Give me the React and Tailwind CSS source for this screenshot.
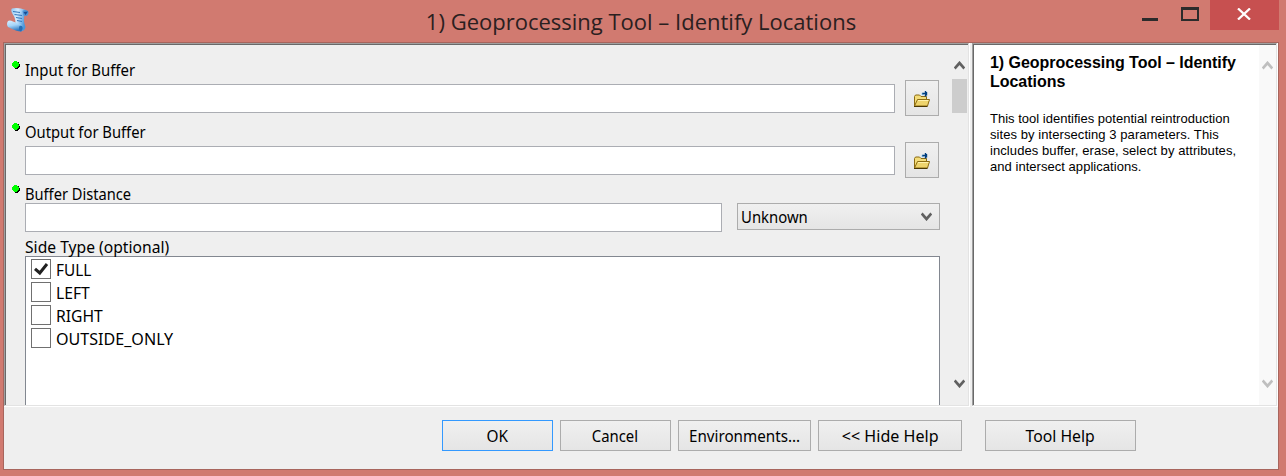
import React from "react";

const UI = "font-['Noto_Sans',sans-serif] text-[16px] leading-[20px] text-black whitespace-pre";

function Label({ children, className = "" }) {
  return <span className={`${UI} block origin-left ${className}`}>{children}</span>;
}

function ScriptIcon() {
  return (
    <svg className="block" width="24" height="26" viewBox="0 0 24 26">
      <defs>
        <linearGradient id="paper" x1="0" y1="0" x2="1" y2="0.3">
          <stop offset="0" stopColor="#8fc8f4" />
          <stop offset=".45" stopColor="#d3ecff" />
          <stop offset="1" stopColor="#4a97dc" />
        </linearGradient>
        <linearGradient id="roll" x1="0" y1="0" x2="0.3" y2="1">
          <stop offset="0" stopColor="#d8efff" />
          <stop offset=".5" stopColor="#a5d5f8" />
          <stop offset="1" stopColor="#2e78be" />
        </linearGradient>
      </defs>
      <path d="M6 1.500 Q12 0 20 3 L18.500 8 Q17 14 19.500 20 Q19 24 14 24.500 L9 20 Q11 13 6 6 Q4.500 3 6 1.500Z" fill="url(#paper)" />
      <path d="M16.500 4 Q19 2 22 4 Q23.500 7 20.500 9 L17.500 8.500Z" fill="#4d93d4" />
      <path d="M17.500 5 L22 4.500 L19.500 8Z" fill="#174d96" />
      <path d="M2 14 Q4 13 7 14.500 L15 17.500 Q18 20 15.500 24.500 Q12 25 2 20 Q0 17 2 14Z" fill="url(#roll)" />
      <path d="M13.500 19 Q17 18 16.500 22 L14.500 24.500 Q12 23 13.500 19Z" fill="#276eb5" />
      <path d="M7 4.500 L14 5.500 M8.500 7.500 L16 8.500 M10 10.500 L16 11.500 M11 13.500 L16 14.500" stroke="#3579bd" strokeWidth="1.200" />
    </svg>
  );
}

function FolderIcon() {
  return (
    <svg className="mt-[3px] block" width="18" height="18" viewBox="0 0 18 18">
      <path d="M1.500 15 V5.500 L2.500 4 H6.500 L8 5.500 H13.500 V8.500" fill="#f3dc79" stroke="#8b6b12" />
      <path d="M1.500 15 L4.500 8.500 H16.500 L14.500 15Z" fill="#eed46d" stroke="#8b6b12" />
      <path d="M5 9.500 H15.500" stroke="#fff2ad" />
      <path d="M1 15.500 H14.500" stroke="#4b3804" />
      <path d="M8.500 3 H10.500" fill="none" stroke="#a5daf5" strokeWidth="2.500" />
      <path d="M10 3.500 V2.500 H14 M12.500 0 V5.500 M13.500 1 V4.500" fill="none" stroke="#003f80" strokeWidth="1.400" />
    </svg>
  );
}

function Chevron({ up, color }) {
  return (
    <svg className="block" width="11" height="9" viewBox="0 0 12 9" preserveAspectRatio="none">
      <path d={up ? "M0.700 7.500 L6 2 L11.300 7.500" : "M0.700 1.500 L6 7 L11.300 1.500"} fill="none" stroke={color} strokeWidth="2.900" />
    </svg>
  );
}

function Dot() {
  return (
    <svg className="mt-[1px] block" width="9" height="9" viewBox="0 0 9 9" shapeRendering="crispEdges">
      <path d="M3 1 H7 V3 H8 V6 H7 V7 H6 V8 H3 V7 H2 V6Z" fill="#000" />
      <path d="M2 0 H5 V1 H6 V2 H7 V5 H6 V6 H5 V7 H2 V6 H1 V5 H0 V2 H1 V1 H2Z" fill="#00ff00" />
    </svg>
  );
}

function Caption({ children, scale }) {
  return (
    <div className="flex h-[24px]">
      <div className="w-[19px] shrink-0 pl-[6px]"><Dot /></div>
      <Label className={`h-[20px] ${scale}`}>{children}</Label>
    </div>
  );
}

function FileRow() {
  return (
    <div className="flex h-[36px] items-start pl-[19px]">
      <div className="mt-[4px] h-[29px] w-[870px] border border-[#abadb3] bg-white" />
      <button className="ml-[10px] flex h-[36px] w-[34px] items-center justify-center border border-[#acacac] bg-linear-to-b from-[#f0f0f0] to-[#e5e5e5]">
        <FolderIcon />
      </button>
    </div>
  );
}

function Option({ children, checked, scale }) {
  return (
    <div className="flex h-[23px] items-start">
      <div className="h-[20px] w-[20px] shrink-0 border border-[#707070] bg-white">
        {checked && (
          <svg className="block" width="18" height="18" viewBox="0 0 18 18">
            <path d="M3 8.800 L7.800 13 L15 4" fill="none" stroke="#212121" strokeWidth="3" />
          </svg>
        )}
      </div>
      <Label className={`ml-[5px] mt-[1px] ${scale}`}>{children}</Label>
    </div>
  );
}

function Button({ children, className, scale }) {
  return (
    <button className={`flex h-[31px] shrink-0 items-center justify-center border bg-linear-to-b from-[#f0f0f0] to-[#e5e5e5] ${className}`}>
      <span className={`${UI} block ${scale}`}>{children}</span>
    </button>
  );
}

export default function App() {
  return (
    <div className="flex h-[476px] w-[1286px] flex-col overflow-hidden bg-[#d17a70]">
      <header className="flex h-[42px] shrink-0 items-start">
        <div className="w-[60px] pl-[6px] pt-[7px]"><ScriptIcon /></div>
        <div className="flex w-[1162px] justify-center pt-[6px]">
          <h1 className="whitespace-pre font-['Open_Sans',sans-serif] text-[22px] leading-[30px] text-[#2a2020]">1) Geoprocessing Tool – Identify Locations</h1>
        </div>
        <div className="-ml-[80px] mt-[18px] h-[3px] w-[16px] shrink-0 bg-[#2b2b2b]" />
        <div className="ml-[23px] mt-[7px] h-[14px] w-[18px] shrink-0 border-2 border-t-[3px] border-[#2b2b2b]" />
        <button className="ml-[11px] flex h-[30px] w-[69px] shrink-0 justify-center bg-[#c75050] pr-[2px] pt-[8px]">
          <svg className="block" width="14" height="12" viewBox="0 0 14 12"><path d="M1 0.500 L13 11.500 M13 0.500 L1 11.500" stroke="white" strokeWidth="2.300" /></svg>
        </button>
      </header>

      <main className="ml-[3px] flex h-[428px] w-[1276px] flex-col border border-[#a8655d] bg-[#efefef]">
        <div className="flex h-[364px] shrink-0">
          <section className="h-[364px] w-[966px] border-b border-r border-b-white border-r-white">
            <div className="flex h-[363px] w-[965px] overflow-hidden border border-b-[#e3e3e3] border-l-[#a0a0a0] border-r-[#e3e3e3] border-t-[#a0a0a0]">
              <div className="flex h-[361px] w-[963px] border-l border-t border-[#696969]">
                <div className="w-[946px] overflow-hidden pt-[15px]">
                  <Caption scale="scale-x-[0.935]">Input for Buffer</Caption>
                  <div className="-mt-[4px]"><FileRow /></div>
                  <div className="mt-[6px]"><Caption scale="scale-x-[0.923]">Output for Buffer</Caption></div>
                  <div className="-mt-[4px]"><FileRow /></div>
                  <div className="mt-[6px]"><Caption scale="scale-x-[0.915]">Buffer Distance</Caption></div>
                  <div className="-mt-[5px] flex h-[29px] pl-[19px]">
                    <div className="h-[29px] w-[697px] border border-[#abadb3] bg-white" />
                    <div className="ml-[15px] flex h-[27px] w-[203px] items-center justify-between border border-[#acacac] bg-linear-to-b from-[#f0f0f0] to-[#e5e5e5] pl-[3px] pr-[7px]">
                      <Label className="scale-x-[0.93]">Unknown</Label>
                      <Chevron color="#606060" />
                    </div>
                  </div>
                  <div className="h-[24px] pl-[19px] pt-[5px]"><Label className="w-fit scale-x-[0.978]">Side Type (optional)</Label></div>
                  <div className="ml-[19px] h-[160px] w-[915px] border border-[#828790] bg-white pl-[5px] pt-[2px]">
                    <Option checked scale="scale-x-[0.96]">FULL</Option>
                    <Option scale="scale-x-[0.98]">LEFT</Option>
                    <Option scale="scale-x-[0.98]">RIGHT</Option>
                    <Option scale="scale-x-[1.005]">OUTSIDE_ONLY</Option>
                  </div>
                </div>
                <div className="flex h-[360px] w-[15px] flex-col items-center pt-[16px]">
                  <Chevron up color="#606060" />
                  <div className="mt-[9px] h-[34px] w-[15px] shrink-0 bg-[#cdcdcd]" />
                  <div className="mt-[266px]"><Chevron color="#606060" /></div>
                </div>
              </div>
            </div>
          </section>
          <aside className="ml-[2px] h-[364px] w-[306px] border-b border-r border-white">
            <div className="h-[363px] w-[305px] border border-b-[#e3e3e3] border-l-[#a0a0a0] border-r-[#e3e3e3] border-t-[#a0a0a0]">
              <div className="flex h-[361px] w-[303px] border-l border-t border-[#696969] bg-white">
                <div className="w-[285px] pl-[16px] pt-[8px] font-['Liberation_Sans',Arial,sans-serif] text-black">
                  <h2 className="whitespace-pre text-[16px] font-bold leading-[19px] tracking-[-0.03px]">{"1) Geoprocessing Tool – Identify\nLocations"}</h2>
                  <div className="mt-[20px] whitespace-pre text-[13px] leading-[16px]">
                    <p className="tracking-[0.01px]">This tool identifies potential reintroduction</p>
                    <p className="tracking-[0.07px]">sites by intersecting 3 parameters. This</p>
                    <p className="tracking-[0.08px]">includes buffer, erase, select by attributes,</p>
                    <p className="tracking-[0.04px]">and intersect applications.</p>
                  </div>
                </div>
                <div className="flex w-[17px] flex-col items-center bg-[#f9f9f9] pt-[16px]">
                  <Chevron up color="#bfbfbf" />
                  <div className="mt-[309px]"><Chevron color="#bfbfbf" /></div>
                </div>
              </div>
            </div>
          </aside>
        </div>
        <footer className="flex pl-[438px] pt-[13px]">
          <Button className="w-[111px] border-[#3399ff]" scale="scale-x-[0.96]">OK</Button>
          <Button className="ml-[7px] w-[111px] border-[#acacac] pr-[2px]" scale="scale-x-[0.93]">Cancel</Button>
          <Button className="ml-[7px] w-[133px] border-[#acacac]" scale="scale-x-[0.95]">Environments...</Button>
          <Button className="ml-[7px] w-[144px] border-[#acacac]" scale="scale-x-[1.005]">{"<< Hide Help"}</Button>
          <Button className="ml-[23px] w-[151px] border-[#acacac]" scale="scale-x-[0.985]">Tool Help</Button>
        </footer>
      </main>
    </div>
  );
}
